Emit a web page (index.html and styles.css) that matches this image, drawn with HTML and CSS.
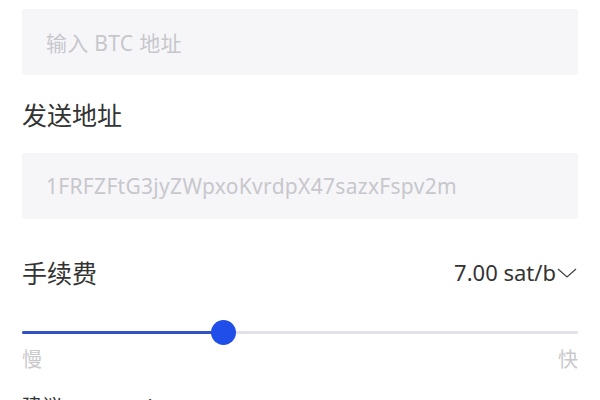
FILE: index.html
```html
<!DOCTYPE html>
<html lang="zh-CN">
<head>
    <meta charset="UTF-8">
    <title>发送 BTC</title>
    <link rel="stylesheet" href="styles.css">
</head>
<body>
    <main class="send">
        <div class="field placeholder">输入 BTC 地址</div>

        <h2 class="label">发送地址</h2>
        <div class="field placeholder">1FRFZFtG3jyZWpxoKvrdpX47sazxFspv2m</div>

        <div class="fee-row">
            <h2 class="label">手续费</h2>
            <div class="fee-value">
                7.00 sat/b
                <svg class="chevron" width="22" height="12" viewBox="0 0 22 12">
                    <path d="M2 2 L11 10 L20 2" fill="none" stroke="#444" stroke-width="1.3"/>
                </svg>
            </div>
        </div>

        <div class="slider">
            <div class="track">
                <div class="fill" style="width: 36.3%"></div>
                <div class="thumb" style="left: 36.3%"></div>
            </div>
        </div>
        <div class="speed">
            <span>慢</span>
            <span>快</span>
        </div>

        <p class="hint">建议 7.00 sat/b</p>
    </main>
</body>
</html>
```

FILE: styles.css
```css
body, h2, p {
    margin: 0;
    padding: 0;
}

body {
    font-family: "Noto Sans", "Noto Sans CJK SC", sans-serif;
    color: #333;
    background: #fff;
}

.send {
    padding: 9px 22px 0 22px;
}

.field {
    height: 66px;
    background-color: #f6f6f9;
    border-radius: 3px;
    padding-left: 24px;
    display: flex;
    align-items: center;
    font-size: 21px;
    letter-spacing: 0.3px;
}

.placeholder {
    color: #c7c7cc;
}

.label {
    font-size: 25px;
    font-weight: normal;
    color: #333;
}

.send > .label {
    height: 78px;
    display: flex;
    align-items: center;
}

.fee-row {
    height: 106px;
    display: flex;
    align-items: center;
    justify-content: space-between;
}

.fee-value {
    display: flex;
    align-items: center;
    font-size: 22px;
    color: #333;
}

.chevron {
    margin-top: 1px;
}

.slider {
    height: 14px;
    display: flex;
    align-items: center;
}

.track {
    position: relative;
    width: 100%;
    height: 3px;
    background-color: #e2e2e8;
    border-radius: 2px;
}

.fill {
    height: 100%;
    background-color: #2f52c4;
    border-radius: 2px;
}

.thumb {
    position: absolute;
    top: 50%;
    width: 25px;
    height: 25px;
    margin: -12.5px 0 0 -12.5px;
    border-radius: 50%;
    background-color: #1f4fe8;
}

.speed {
    display: flex;
    justify-content: space-between;
    font-size: 20px;
    color: #c9c9cc;
    line-height: 26px;
    margin-top: 8px;
}

.hint {
    margin-top: 18px;
    font-size: 20px;
    color: #333;
}
```
